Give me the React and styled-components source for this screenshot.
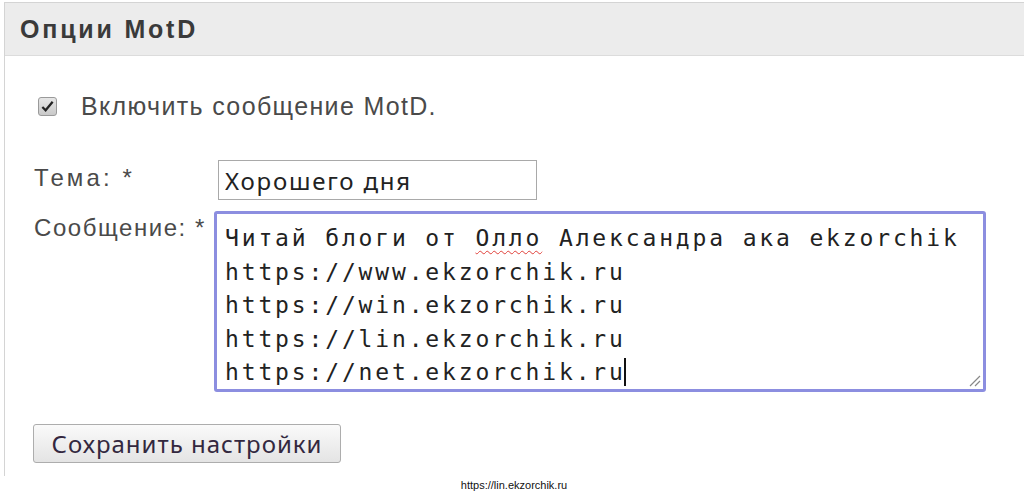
import React from 'react';
import styled, { createGlobalStyle } from 'styled-components';

const GlobalStyle = createGlobalStyle`
  html, body {
    margin: 0;
    padding: 0;
    background: #fff;
    overflow: hidden;
  }
  body {
    font-family: "Liberation Sans", Arial, sans-serif;
  }
`;

const Page = styled.div`
  width: 1024px;
  height: 493px;
  padding: 2px 0 0 4px;
  box-sizing: border-box;
  display: flex;
  flex-direction: column;
`;

const Panel = styled.section`
  width: 1060px;
  height: 474px;
  box-sizing: border-box;
  border: 1px solid #d4d4d4;
  border-bottom: none;
  display: flex;
  flex-direction: column;
`;

const Header = styled.header`
  height: 53px;
  box-sizing: border-box;
  background: #ececec;
  border-bottom: 1px solid #dcdcdc;
  display: flex;
  align-items: center;
  padding-left: 15px;

  h2 {
    margin: 0;
    font-size: 25px;
    letter-spacing: 2.8px;
    font-weight: bold;
    color: #3a3a3a;
  }
`;

const Body = styled.div`
  padding: 35px 0 0 29px;
  display: flex;
  flex-direction: column;
`;

const CheckRow = styled.label`
  display: flex;
  align-items: center;
  gap: 24px;
  padding-left: 4px;
  font-size: 25px;
  letter-spacing: 1.35px;
  color: #4a4a4a;
  height: 30px;
`;

const Box = styled.span`
  width: 19px;
  height: 19px;
  flex: none;
  box-sizing: border-box;
  border: 1px solid #9a9a9a;
  border-radius: 3px;
  background: linear-gradient(#e6e6e6, #c9c9c9);
  display: flex;
  align-items: center;
  justify-content: center;

  svg {
    width: 15px;
    height: 15px;
  }
`;

const Field = styled.div`
  display: grid;
  grid-template-columns: 182px auto;
  align-items: start;
  margin-top: ${({ $top }) => $top}px;
`;

const Label = styled.span`
  font-size: 24px;
  letter-spacing: ${({ $ls }) => $ls}px;
  color: #4a4a4a;
  padding-top: ${({ $pad }) => $pad}px;
  white-space: nowrap;
`;

const Input = styled.input`
  width: 319px;
  height: 40px;
  box-sizing: border-box;
  margin-left: 2px;
  border: 1px solid #a9a9a9;
  padding: 0 6px;
  font-family: "Noto Sans", "Open Sans", sans-serif;
  font-size: 24px;
  letter-spacing: 1.8px;
  color: #222;
  outline: none;
`;

const MessageBox = styled.div`
  position: relative;
  width: 772px;
  height: 181px;
  box-sizing: border-box;
  margin-left: -2px;
  border: 3px solid #8c8ee0;
  border-radius: 3px;
  padding: 8px 0 0 8px;
  font-family: "DejaVu Sans Mono", "Liberation Mono", monospace;
  font-size: 23px;
  letter-spacing: 2.85px;
  line-height: 33.5px;
  color: #222;
  white-space: pre;
  overflow: hidden;
`;

const Misspelled = styled.span`
  text-decoration: underline wavy #e0403a;
  text-decoration-thickness: 1px;
  text-underline-offset: 4px;
`;

const Caret = styled.span`
  display: inline-block;
  width: 2px;
  height: 28px;
  background: #111;
  vertical-align: -6px;
  margin-left: -2px;
`;

const Grip = styled.svg`
  position: absolute;
  right: 2px;
  bottom: 2px;
  width: 14px;
  height: 14px;
`;

const Button = styled.button`
  margin-top: 32px;
  width: 308px;
  height: 39px;
  box-sizing: border-box;
  margin-left: -1px;
  border: 1px solid #adadad;
  border-radius: 3px;
  background: linear-gradient(#fafafa, #e4e4e4);
  font-family: "Noto Sans", "Open Sans", sans-serif;
  font-size: 24px;
  letter-spacing: 1px;
  color: #33283f;
  padding: 0;
`;

const Footer = styled.div`
  text-align: center;
  font-size: 11px;
  color: #111;
  margin-top: 3px;
`;

export default function App() {
  return (
    <>
      <GlobalStyle />
      <Page>
        <Panel>
          <Header>
            <h2>Опции MotD</h2>
          </Header>
          <Body>
            <CheckRow>
              <Box>
                <svg viewBox="0 0 16 16">
                  <path d="M2.5 8.5 L6 12 L13.5 3" fill="none" stroke="#222" strokeWidth="2.4" />
                </svg>
              </Box>
              Включить сообщение MotD.
            </CheckRow>
            <Field $top={39}>
              <Label $pad={4} $ls={3.1}>Тема: *</Label>
              <Input defaultValue="Хорошего дня" />
            </Field>
            <Field $top={11}>
              <Label $pad={3} $ls={1.55}>Сообщение: *</Label>
              <MessageBox role="textbox">
                {'Читай блоги от '}
                <Misspelled>Олло</Misspelled>
                {' Александра ака ekzorchik\nhttps://www.ekzorchik.ru\nhttps://win.ekzorchik.ru\nhttps://lin.ekzorchik.ru\nhttps://net.ekzorchik.ru'}
                <Caret />
                <Grip viewBox="0 0 14 14">
                  <path d="M13 3 L3 13 M13 8 L8 13" stroke="#888" strokeWidth="1.2" />
                </Grip>
              </MessageBox>
            </Field>
            <Button>Сохранить настройки</Button>
          </Body>
        </Panel>
        <Footer>https://lin.ekzorchik.ru</Footer>
      </Page>
    </>
  );
}
